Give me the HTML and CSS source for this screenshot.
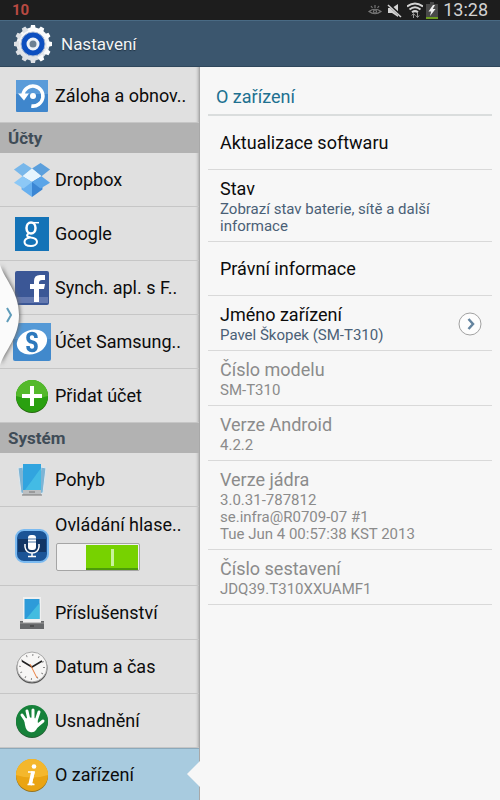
FILE: index.html
```html
<!DOCTYPE html>
<html lang="cs">

<head>
    <meta charset="UTF-8">
    <meta name="viewport" content="width=device-width, initial-scale=1">
    <title>Nastavení</title>
    <link rel="stylesheet" href="styles.css">
</head>

<body>
    <!-- status bar -->
    <div class="status">
        <span class="count">10</span>
        <div class="tray">
            <svg width="14" height="12" viewBox="0 0 14 12" fill="none" stroke="#777" stroke-width="1.2">
                <path d="M1 7.500Q7 3 13 7.500Q7 12 1 7.500z" />
                <circle cx="7" cy="7.500" r="1.500" />
                <path d="M7 1v3M3 2l1.500 2M11 2L9.500 4" />
            </svg>
            <svg width="15" height="15" viewBox="0 0 15 15">
                <path d="M1 5h4l6-4v13l-6-4H1z" fill="#d4d4d4" />
                <path d="M0 0l15 14" stroke="#1d1d1d" stroke-width="3" />
                <path d="M1 2l13 12" stroke="#d4d4d4" stroke-width="1.500" />
            </svg>
            <svg class="wifi" width="16" height="16" viewBox="0 0 16 16" fill="none" stroke="#d4d4d4" stroke-width="2">
                <path d="M0 4.500Q8-1.500 16 4.500M2.500 7.500Q8 3 13.500 7.500M5 10.300Q8 8 11 10.300" />
                <path d="M6.500 16v-4M4.800 13.500l1.700-2 1.700 2M10.500 11v4M8.800 13.500l1.700 2 1.700-2" stroke="#999" stroke-width="1" />
            </svg>
            <svg width="12" height="17" viewBox="0 0 12 17">
                <path d="M4 0h4v2h4v15H0V2h4z" fill="#494949" />
                <path d="M0 15h12v2H0z" fill="#6d9c20" />
                <path d="M7 3L2.500 9.500h2.700L4 14l5.500-7H6.800L9 3z" fill="#eee" />
            </svg>
            <span class="time">13:28</span>
        </div>
    </div>

    <header class="appbar">
        <svg width="40" height="40" viewBox="0 0 40 40">
            <defs>
                <linearGradient id="gear" x1="0" y1="0" x2="0" y2="1">
                    <stop offset="0" stop-color="#fff" />
                    <stop offset="1" stop-color="#dcdfe3" />
                </linearGradient>
            </defs>
            <g fill="url(#gear)">
                <circle cx="20" cy="20" r="16.500" />
                <path id="tooth" d="M17 6l1-5h4l1 5zM17 34l1 5h4l1-5z" />
                <use href="#tooth" transform="rotate(30 20 20)" />
                <use href="#tooth" transform="rotate(60 20 20)" />
                <use href="#tooth" transform="rotate(90 20 20)" />
                <use href="#tooth" transform="rotate(120 20 20)" />
                <use href="#tooth" transform="rotate(150 20 20)" />
            </g>
            <circle cx="20" cy="20" r="12" fill="#0d4fc0" stroke="#a9b9d3" />
            <circle cx="20" cy="20" r="5" fill="#6d8092" stroke="#edf1f7" stroke-width="3" />
        </svg>
        <h1>Nastavení</h1>
    </header>

    <div class="main">
        <nav class="side">
            <a class="row first" href="#">
                <svg class="icon" viewBox="0 0 34 34">
                    <rect x="1" y="1" width="32" height="32" rx="1" fill="#3f86cc" />
                    <path d="M1 1h32v14H1z" fill="#5a9bd9" />
                    <path d="M8 16A10 10 0 1 1 17 27" fill="none" stroke="#fff" stroke-width="3.500" transform="rotate(4 17 17)" />
                    <path d="M3 14.500h11l-5 7z" fill="#fff" />
                    <circle cx="18" cy="17" r="3" fill="#fff" />
                </svg>
                <span>Záloha a obnov..</span>
            </a>
            <h2>Účty</h2>
            <a class="row" href="#">
                <svg class="icon wide" viewBox="0 0 40 38">
                    <path d="M11 1L1 8l9 7 10-8z" fill="#78b7ea" />
                    <path d="M29 1l10 7-9 7-10-8z" fill="#5b9fdc" />
                    <path d="M20 7l10 8-10 6-10-6z" fill="#e6f5fe" />
                    <path d="M10 15l10 6v16L9 29v-8z" fill="#68b0ef" />
                    <path d="M30 15l-10 6v16l11-8v-8z" fill="#3b86d4" />
                    <path d="M1 22l9-7 10 6-9 7z" fill="#8cc8f6" />
                    <path d="M39 22l-9-7-10 6 9 7z" fill="#5ba5e8" />
                </svg>
                <span>Dropbox</span>
            </a>
            <a class="row" href="#">
                <svg class="icon" viewBox="0 0 34 34">
                    <rect width="34" height="34" fill="#1473b7" />
                    <g fill="none" stroke="#fff">
                        <ellipse cx="16" cy="11" rx="4.500" ry="5.500" stroke-width="2.500" />
                        <path d="M17 5.700h7" stroke-width="1.500" />
                        <path d="M14 16c-4 3-1 4 2 4.500 4 .5 6 2 6 4.500s-3 4-6 4-6.500-1-6.500-4 3-4 5.500-4.500" stroke-width="2" />
                    </g>
                </svg>
                <span>Google</span>
            </a>
            <a class="row" href="#">
                <svg class="icon" viewBox="0 0 34 34">
                    <rect width="34" height="34" rx="2" fill="#3b5796" />
                    <path d="M1 26h32v6H1z" fill="#6479b0" />
                    <path d="M19 31V18h-4v-5h4v-3q0-6 6-6h5v5h-3q-3 0-3 3v1h6l-1 5h-5v13z" fill="#fff" />
                </svg>
                <span>Synch. apl. s F..</span>
            </a>
            <a class="row" href="#">
                <svg class="icon wide" viewBox="0 0 38 38">
                    <rect width="38" height="38" rx="2" fill="#4189cc" />
                    <path d="M0 0h38v16H0z" fill="#5599d6" />
                    <ellipse cx="19" cy="19" rx="15.500" ry="12" fill="#fff" transform="rotate(-20 19 19)" />
                    <path d="M23 15q0-4.500-4-4.500t-4 4 4 4.500 4 4.500-4 4-4-4.500" fill="none" stroke="#2d79bd" stroke-width="3.600" />
                </svg>
                <span>Účet Samsung..</span>
            </a>
            <a class="row" href="#">
                <svg class="icon" viewBox="0 0 34 34">
                    <circle cx="17" cy="18" r="16" fill="#26680f" />
                    <circle cx="17" cy="17" r="16" fill="#2aa010" />
                    <path d="M1 17a16 16 0 0 1 32 0q-16 5-32 0z" fill="#54b92b" />
                    <path d="M17 7v20M7 17h20" stroke="#fff" stroke-width="4" />
                </svg>
                <span>Přidat účet</span>
            </a>
            <h2>Systém</h2>
            <a class="row" href="#">
                <svg class="icon" viewBox="0 0 34 34">
                    <path d="M3 5l5-1 3 27-5-1z" fill="#7eb4d4" stroke="#dce8ef" />
                    <path d="M31 5l-5-1-3 27 5-1z" fill="#7eb4d4" stroke="#dce8ef" />
                    <path d="M8 1h18v26H8z" fill="#31a4df" />
                    <path d="M8 27h18v5H8z" fill="#bcbfc1" />
                    <path d="M26 5v22H10z" fill="#43bbe5" />
                    <path d="M14 29h6M7 32h20" stroke="#777" />
                </svg>
                <span>Pohyb</span>
            </a>
            <div class="row tall">
                <svg class="icon" viewBox="0 0 34 34">
                    <rect x="1" y="1" width="32" height="32" rx="8" fill="#1b5496" stroke="#7bbaf0" stroke-width="2" />
                    <path d="M3 10h28v13H3z" fill="#123665" />
                    <rect x="13" y="6" width="8" height="15" rx="3" fill="#fff" />
                    <path d="M10 15v3q1 6 7 6t7-6v-3M17 24v3M13 27.500h8" fill="none" stroke="#fff" stroke-width="1.500" />
                    <path d="M13 10h8M13 13h8" stroke="#4672a3" />
                </svg>
                <div class="control">
                    <label for="voice">Ovládání hlase..</label>
                    <input class="switch" id="voice" type="checkbox" checked>
                </div>
            </div>
            <a class="row" href="#">
                <svg class="icon" viewBox="0 0 34 34">
                    <path d="M8 1h18v26H8z" fill="#f0f0f0" />
                    <path d="M9.500 3h15v20h-15z" fill="#2d9bd9" />
                    <path d="M24.500 7v16H11z" fill="#43bce0" />
                    <path d="M5 25h3v2h18v-2h3v8H5z" fill="#67696b" />
                    <path d="M5 27h24" stroke="#9b9b9b" />
                    <path d="M15 30h4" stroke="#333" />
                </svg>
                <span>Příslušenství</span>
            </a>
            <a class="row" href="#">
                <svg class="icon" viewBox="0 0 34 34">
                    <circle cx="17" cy="18" r="15.500" fill="#555" />
                    <circle cx="17" cy="17" r="15" fill="#f7f6f5" stroke="#a9a9a9" />
                    <circle cx="17" cy="17" r="12" fill="none" stroke="#888" stroke-width="2" stroke-dasharray="1 5.283" />
                    <path d="M7 11l10 6 10-6" fill="none" stroke="#222" stroke-width="1.600" />
                    <path d="M15 14l7 14" stroke="#ed8040" />
                </svg>
                <span>Datum a čas</span>
            </a>
            <a class="row" href="#">
                <svg class="icon" viewBox="0 0 34 34">
                    <circle cx="17" cy="18" r="16" fill="#235c32" />
                    <circle cx="17" cy="17" r="16" fill="#16813a" />
                    <path d="M11 17L7 11M14 16L12 7M18 16V6M21 17l3-9M22 22l6-5" stroke="#fff" stroke-width="3" stroke-linecap="round" />
                    <path d="M9 15q7-3 13 0l1 4 3-1-5 8q-2 3-6 2-4-1-5-7z" fill="#fff" />
                </svg>
                <span>Usnadnění</span>
            </a>
            <a class="row active" href="#" aria-current="page">
                <svg class="icon" viewBox="0 0 34 34">
                    <circle cx="17" cy="18" r="16" fill="#96741f" />
                    <circle cx="17" cy="17" r="16" fill="#eaa412" />
                    <path d="M1 17a16 16 0 0 1 32 0q-16 5-32 0z" fill="#f4b72c" />
                    <circle cx="19" cy="8.500" r="2.300" fill="#fff" />
                    <path d="M13 14h6l-3 12h2.500M12.500 26.500h7" fill="none" stroke="#fff" stroke-width="1.600" />
                    <path d="M18 13.500L15 27" stroke="#fff" stroke-width="3.500" />
                </svg>
                <span>O zařízení</span>
            </a>

            <!-- pull-out handle over the list -->
            <button class="handle" type="button" aria-label="Panel">
                <svg width="24" height="116" viewBox="0 0 24 116">
                    <path d="M0 7C5 22 19 34 19 57S5 92 0 107z" fill="#fbfbfb" />
                    <path d="M7 50l4 7-4 7" fill="none" stroke="#5f9cba" stroke-width="2" />
                </svg>
            </button>
        </nav>

        <main class="detail">
            <h2 class="title">O zařízení</h2>
            <ul>
                <li><h3>Aktualizace softwaru</h3></li>
                <li>
                    <h3>Stav</h3>
                    <p>Zobrazí stav baterie, sítě a další informace</p>
                </li>
                <li><h3>Právní informace</h3></li>
                <li class="more">
                    <div>
                        <h3>Jméno zařízení</h3>
                        <p>Pavel Škopek (SM-T310)</p>
                    </div>
                    <button class="go" type="button" aria-label="Jméno zařízení">
                        <svg width="24" height="24" viewBox="0 0 24 24" fill="none">
                            <circle cx="12" cy="12" r="11" fill="#fdfdfd" stroke="#a2a2a2" />
                            <path d="M10.500 7l4.500 5-4.500 5" stroke="#64849f" stroke-width="2.500" />
                        </svg>
                    </button>
                </li>
                <li class="off">
                    <h3>Číslo modelu</h3>
                    <p>SM-T310</p>
                </li>
                <li class="off">
                    <h3>Verze Android</h3>
                    <p>4.2.2</p>
                </li>
                <li class="off">
                    <h3>Verze jádra</h3>
                    <p>3.0.31-787812<br>se.infra@R0709-07 #1<br>Tue Jun 4 00:57:38 KST 2013</p>
                </li>
                <li class="off">
                    <h3>Číslo sestavení</h3>
                    <p>JDQ39.T310XXUAMF1</p>
                </li>
            </ul>
        </main>
    </div>
</body>

</html>
```
FILE: styles.css
```css
* {
    box-sizing: border-box;
}

body {
    margin: 0;
    min-height: 100vh;
    display: flex;
    flex-direction: column;
    background: #f7f7f7;
    font-family: Roboto, "Noto Sans", sans-serif;
    color: #0c0c0c;
}

h1, h2, h3, p, ul {
    margin: 0;
    padding: 0;
    font-weight: normal;
}

svg {
    display: block;
    flex: none;
}

button {
    padding: 0;
    border: 0;
    background: none;
}

/* top bars */
.status {
    display: flex;
    justify-content: space-between;
    align-items: center;
    height: 20px;
    padding: 0 12px;
    background: #1d1d1d;
}

.count {
    color: #b84a42;
    font-size: 15px;
    font-weight: bold;
}

.tray {
    display: flex;
    align-items: center;
    gap: 5px;
}

.wifi {
    margin-right: -2px;
}

.time {
    color: #d2d2d2;
    font-size: 18px;
    line-height: 20px;
}

.appbar {
    display: flex;
    align-items: center;
    gap: 8px;
    height: 47px;
    padding: 0 13px;
    background: #3b566e;
    border-top: 1px solid #496a84;
    border-bottom: 1px solid #2f475c;
}

.appbar h1 {
    font-size: 17px;
    color: #f2f4f6;
    text-shadow: 0 1px 1px #1e3040;
}

.main {
    flex: 1;
    display: flex;
}

/* left list */
.side {
    position: relative;
    width: 40%;
    background: #e0e0e0;
    border-right: 1px solid #a8a8a8;
    box-shadow: inset -3px 0 3px -2px #aaa;
}

.side h2 {
    height: 30px;
    padding-left: 8px;
    background: #b2b2b2;
    color: #3f4c57;
    font-size: 17px;
    font-weight: bold;
    line-height: 30px;
}

.row {
    display: flex;
    align-items: center;
    gap: 6px;
    height: 54px;
    padding-left: 11px;
    border-bottom: 1px solid #c6c6c6;
    color: #0c0c0c;
    font-size: 18px;
    white-space: nowrap;
    text-decoration: none;
}

.row.first {
    height: 56px;
    padding-top: 2px;
}

.icon {
    width: 34px;
    height: 34px;
    margin-left: 4px;
}

.icon.wide {
    width: 38px;
    height: 38px;
    margin: 0 -2px 0 2px;
}

.row.tall {
    height: 79px;
}

.control {
    display: flex;
    flex-direction: column;
    gap: 8px;
    padding-bottom: 8px;
}

.switch {
    appearance: none;
    width: 84px;
    height: 28px;
    margin: 0 0 0 1px;
    border: 1px solid #a5a5a5;
    border-radius: 2px;
    background:
        linear-gradient(#c8f29a, #c8f29a) 54px 5px / 3px 17px no-repeat,
        linear-gradient(#4c9b0a, #4c9b0a) 29px 24px / 52px 2px no-repeat,
        linear-gradient(#77d200, #77d200) 29px 1px / 52px 24px no-repeat,
        #f1f1f1;
}

.switch:not(:checked) {
    background: #f1f1f1;
}

.row.active {
    position: relative;
    height: 52px;
    border-top: 1px solid #8ba9bb;
    border-bottom: 0;
    background: #a8cbdf;
}

.row.active::after {
    content: "";
    position: absolute;
    right: -1px;
    top: 12px;
    border: 13px solid transparent;
    border-left: 0;
    border-right-color: #f7f7f7;
}

.handle {
    position: absolute;
    left: 0;
    top: 191px;
    filter: drop-shadow(1px 0 2px #666);
}

/* right pane */
.detail {
    flex: 1;
    padding: 0 8px;
}

.title {
    height: 49px;
    padding: 2px 8px 0;
    border-bottom: 2px solid #dadddd;
    color: #207090;
    font-size: 18px;
    line-height: 55px;
}

.detail ul {
    list-style: none;
}

.detail li {
    display: flex;
    flex-direction: column;
    justify-content: center;
    min-height: 54px;
    padding: 7px 12px 6px;
    border-bottom: 1px solid #d9d9d9;
}

.detail h3 {
    font-size: 18px;
    line-height: 24px;
}

.detail p {
    color: #4a6076;
    font-size: 15px;
    line-height: 17px;
}

.detail li.more {
    flex-direction: row;
    justify-content: space-between;
    align-items: center;
    padding-right: 10px;
}

.detail .off h3,
.detail .off p {
    color: #8b8b8b;
}
```
